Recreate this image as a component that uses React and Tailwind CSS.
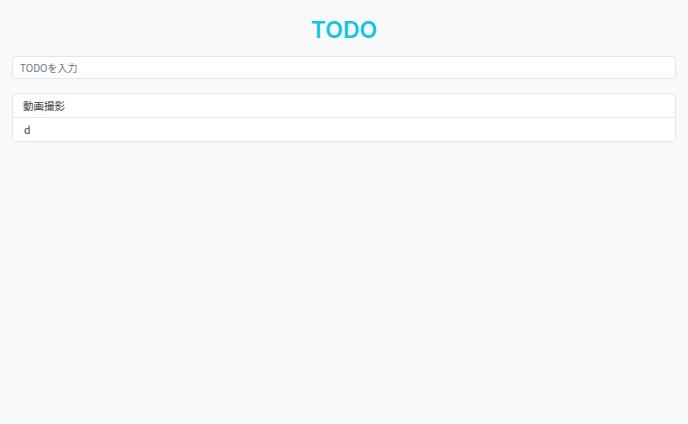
export default function App() {
  return (
    <div className="min-h-[424px] w-full bg-[#f8f9fa] px-[12px] pt-[15px]" style={{ fontFamily: '"Noto Sans CJK JP", "Noto Sans", sans-serif' }}>
      <h1 className="text-center text-[23px] font-semibold leading-[30px] text-[#14c4e4]" style={{ fontFamily: 'Inter, "Noto Sans", sans-serif' }}>TODO</h1>
      <input
        type="text"
        placeholder="TODOを入力"
        className="mt-[11px] block h-[23px] w-full rounded-[3px] border border-[#e3e6ea] bg-white px-[7px] text-[10px] text-[#495057] outline-none placeholder:text-[#6c757d]"
      />
      <ul className="mt-[14px] rounded-[3px] border border-[#e3e6ea] bg-white text-[10.5px] text-[#3d3d3d]">
        <li className="flex h-[24px] items-center border-b border-[#e3e6ea] px-[10px]">動画撮影</li>
        <li className="flex h-[23px] items-center px-[11px]">d</li>
      </ul>
    </div>
  );
}
